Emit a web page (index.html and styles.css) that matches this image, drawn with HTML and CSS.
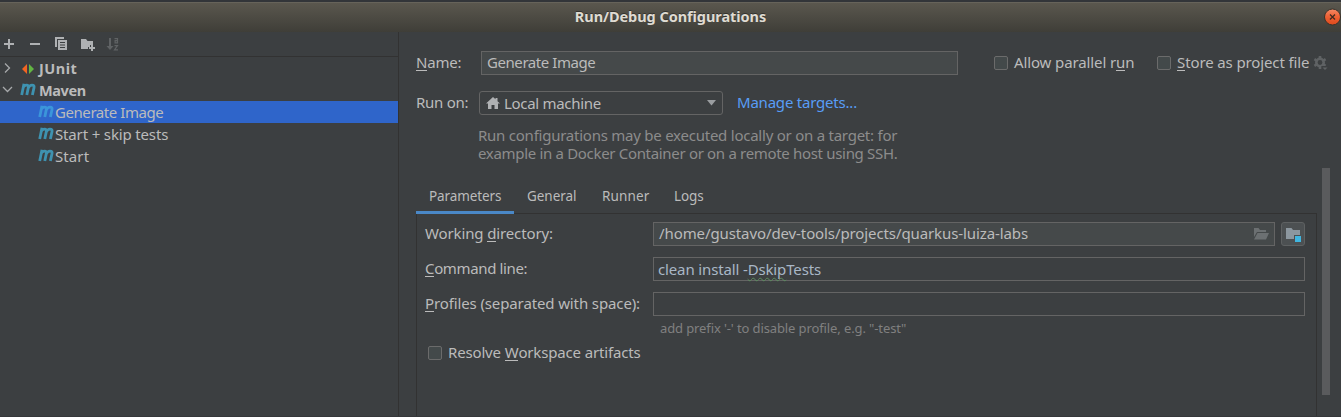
FILE: index.html
```html
<!DOCTYPE html>
<html lang="en"><head><meta charset="utf-8"><title>Run/Debug Configurations</title><link rel="stylesheet" href="styles.css"></head>
<body>
<svg class="defs" width="0" height="0"><defs>
<symbol id="m" viewBox="0 0 16 13"><path fill="none" stroke="currentColor" stroke-width="2.800" d="M4 .8 1.700 12M2.900 5C4 2.700 5 2.200 6.500 2.200 8.400 2.200 8.600 3.200 8.300 4.600L6.800 12M8.300 5C9.400 2.700 10.500 2.200 12 2.200c2 0 2.300 1 2 2.400L12.400 12"/></symbol>
</defs></svg>
<div class="window">
<header class="titlebar">
  <h1 class="title">Run/Debug Configurations</h1>
  <svg class="close" width="17" height="18" viewBox="0 0 17 18"><defs><linearGradient id="cg" x2="0" y2="1"><stop offset="0" stop-color="#f38a66"/><stop offset=".5" stop-color="#ee5f32"/><stop offset="1" stop-color="#dd4a1c"/></linearGradient></defs><circle cx="8.500" cy="9" r="8" fill="url(#cg)" stroke="#34322c"/><path d="m6 6.500 5 5m0-5-5 5" stroke="#3c2a20" stroke-width="1.300"/></svg>
</header>
<div class="main">
  <aside class="sidebar">
    <div class="toolbar">
      <svg width="16" height="16" viewBox="0 0 16 16"><path d="M3 8h10M8 3v10" stroke="#afb1b3" stroke-width="2"/></svg>
      <svg width="16" height="16" viewBox="0 0 16 16"><path d="M3 8h10" stroke="#afb1b3" stroke-width="2"/></svg>
      <svg width="16" height="16" viewBox="0 0 16 16"><path fill="#afb1b3" fill-rule="evenodd" d="M2 1h9v2H4v8H2zM5 4h9v10H5zM7 6v1h5V6zM7 8.500v1h5v-1zM7 11v1h5v-1z"/></svg>
      <svg width="16" height="16" viewBox="0 0 16 16"><path fill="#afb1b3" d="M2 3h5l1.500 2H14v4h-3v2H9v2H2zM12 9h2v2h2v2h-2v2h-2v-2h-2v-2h2z"/></svg>
      <svg width="16" height="16" viewBox="0 0 16 16"><path fill="#5f6264" d="M4 2h2v8h2.500L5 14 1.500 10H4z"/><path fill="none" stroke="#5f6264" stroke-width="1.200" d="M9.500 2.600h3v4.200h-2.400V4.700h2.400M9.500 9.600h3l-3 4.200h3.500"/></svg>
    </div>
    <ul class="tree">
      <li class="row group"><svg class="arrow" width="14" height="14" viewBox="0 0 14 14"><path d="m5 2.500 4.500 4.500L5 11.500" fill="none" stroke="#a7a9ab" stroke-width="1.300"/></svg><svg class="junit" width="12" height="10" viewBox="0 0 12 10"><path fill="#f26522" d="M5 0v10L0 5z"/><path fill="#62b543" d="M7 0v10l5-5z"/></svg><span class="t-junit">JUnit</span></li>
      <li class="row group"><svg class="arrow" width="14" height="14" viewBox="0 0 14 14"><path d="m3 4 4.500 4.500L12 4" fill="none" stroke="#a7a9ab" stroke-width="1.300"/></svg><svg class="maven"><use href="#m"/></svg><span class="t-maven">Maven</span></li>
      <li class="row child selected"><svg class="maven"><use href="#m"/></svg><span class="t-image">Generate Image</span></li>
      <li class="row child"><svg class="maven"><use href="#m"/></svg><span class="t-skip">Start + skip tests</span></li>
      <li class="row child"><svg class="maven"><use href="#m"/></svg><span class="t-start">Start</span></li>
    </ul>
  </aside>
  <main class="content">
    <div class="line name-line">
      <label class="name-label"><u>N</u>ame:</label>
      <div class="field name-field t-image">Generate Image</div>
      <i class="box"></i><span class="option parallel">Allow parallel r<u>u</u>n</span>
      <i class="box"></i><span class="option store"><u>S</u>tore as project file</span>
      <svg class="gear" width="16" height="16" viewBox="0 0 16 16"><circle cx="7" cy="7.500" r="3.700" fill="none" stroke="#5f6264" stroke-width="2.600"/><path d="M7 1v2.500M7 11.500V14M1.400 4.200l2.100 1.300M10.500 9.500l2 1.300M1.400 10.800l2.100-1.300M10.500 5.500l2.100-1.300" stroke="#5f6264" stroke-width="2.600"/><path d="M8 11h7.500v4H11z" fill="#3c3f41"/><path d="M9.500 12.500h5L12 15z" fill="#5f6264"/></svg>
    </div>
    <div class="line run-line">
      <label class="run-label">Run on:</label>
      <div class="combo"><svg width="14" height="12" viewBox="0 0 14 12"><path fill="#afb1b3" d="M7 0 0 6.500h2V12h3.500V8h3v4H12V6.500h2l-2.500-2.300V1h-2v1.300z"/></svg><span class="combo-text">Local machine</span><svg width="9" height="6" viewBox="0 0 9 6"><path fill="#9a9da0" d="M0 0h9L4.500 5.500z"/></svg></div>
      <a class="link">Manage targets...</a>
    </div>
    <p class="hint"><span class="hint-first">Run configurations may be executed locally or on a target: for</span><span class="hint-second">example in a Docker Container or on a remote host using SSH.</span></p>
    <nav class="tabs"><span class="tab active">Parameters</span><span class="tab general">General</span><span class="tab runner">Runner</span><span class="tab logs">Logs</span></nav>
    <section class="panel">
      <div class="form-row"><label class="t-working">Working <u>d</u>irectory:</label><div class="field path"><span>/home/gustavo/dev-tools/projects/quarkus-luiza-labs</span><svg width="16" height="12" viewBox="0 0 16 12"><path fill="#6c7072" d="M1 0h4.500l1.500 2h6v2H4L1 9zM4.500 5H16l-3 6.500H1z"/></svg></div>
        <div class="browse"><svg width="16" height="14" viewBox="0 0 16 14"><path fill="#8c979f" d="M0 0h5.500L7 2h7v5H8v4H0z"/><path fill="#40b6e0" d="M9 8h6v6H9z"/></svg></div></div>
      <div class="form-row"><label class="t-command"><u>C</u>ommand line:</label><div class="field command"><span>clean install -<span class="typo">Dskip</span>Tests</span></div></div>
      <div class="form-row"><label class="t-profiles"><u>P</u>rofiles (separated with space):</label><div class="field profiles"></div></div>
      <p class="note">add prefix '-' to disable profile, e.g. "-test"</p>
      <div class="resolve"><i class="box"></i><span>Resolve <u>W</u>orkspace artifacts</span></div>
    </section>
  </main>
  <div class="scroll"><div class="thumb"></div></div>
</div>
</div>
</body></html>
```
FILE: styles.css
```css
* { box-sizing: border-box; }
body { margin: 0; background: #3c3f41; color: #bbb; font: 15px/18px "Noto Sans", sans-serif; overflow: hidden; }
svg { display: block; flex: none; }
.defs { position: absolute; }
u { text-decoration: none; box-shadow: inset 0 -1px #bbb; display: inline-block; height: 18px; line-height: 18px; vertical-align: top; }
.window { height: 417px; display: flex; flex-direction: column; white-space: nowrap; border-bottom: 1px solid #35373a; }
.titlebar { height: 32px; flex: none; border-top: 2px solid #323539; background: linear-gradient(#66635a 0 1px, #5a574e 1px, #3f3e38); display: grid; grid-template-columns: 1fr auto 1fr; align-items: center; }
.title { grid-column: 2; margin: 0; font-size: 14.5px; font-weight: bold; line-height: 28px; padding-bottom: 2px; color: #dfdbd2; letter-spacing: -.06px; text-shadow: 0 -1px #33322e; }
.close { justify-self: end; }
.main { flex: 1; display: flex; min-height: 0; }
.sidebar { width: 399px; border-right: 1px solid #323232; }
.toolbar { height: 25px; display: flex; gap: 10px; padding: 4px 1px; border-bottom: 1px solid #323232; }
.tree { list-style: none; margin: 0; padding: 0; }
.row { height: 22px; display: flex; align-items: center; line-height: 22px; }
.group { font-weight: bold; font-size: 14.5px; }
.group span { margin-top: -1px; }
.row.child { padding-left: 38px; }
.selected { background: #2f65ca; }
.arrow { margin-top: -1px; }
.junit { margin: 1px 5px 0 8px; }
.maven { width: 16px; height: 13px; margin: -1px 1px 0 0; color: #3e92b0; }
.group .maven { margin: -2px 3px 0 6px; }
.selected .maven { color: #3b96da; }
.t-junit { letter-spacing: .5px; }
.t-maven { letter-spacing: -.4px; }
.t-image { letter-spacing: -.43px; }
.t-skip { letter-spacing: -.15px; }
.t-start { letter-spacing: .1px; }
.content { width: 917px; flex: none; padding: 19px 0 0 17px; display: flex; flex-direction: column; }
.line { display: flex; height: 24px; align-items: center; }
.line label, .option, .link, .form-row label, .resolve span { position: relative; top: -1px; }
.line > * { flex: none; }
.name-label { width: 65px; letter-spacing: -.2px; }
.field { height: 24px; border: 1px solid #646464; padding-left: 5px; line-height: 20px; }
.name-field { width: 477px; background: #45494a; margin-right: 36px; }
.box { width: 14px; height: 14px; flex: none; border: 1px solid #6b6b6b; border-radius: 2px; background: #43494a; }
.option { margin-left: 6px; }
.parallel { width: 143px; letter-spacing: -.12px; }
.store { width: 136px; letter-spacing: -.12px; }
.run-line { margin-top: 16px; }
.run-label { width: 63px; letter-spacing: -.25px; }
.combo { width: 244px; height: 24px; border: 1px solid #646464; border-radius: 3px; display: flex; align-items: center; padding: 0 6px; }
.combo-text { flex: 1; padding: 0 0 1px 4px; letter-spacing: -.3px; }
.link { margin-left: 14px; color: #589df6; letter-spacing: -.21px; }
.hint { margin: 11px 0 0 62px; color: #8c8c8c; display: flex; flex-direction: column; }
.hint-first { letter-spacing: -.24px; }
.hint-second { letter-spacing: -.32px; }
.tabs { height: 35px; margin-top: 17px; width: 901px; flex: none; display: flex; font-size: 13.5px; line-height: 35px; box-shadow: inset 0 -1px #323232; }
.tab { height: 35px; margin-right: 13px; }
.active { width: 98px; padding-left: 13px; border-bottom: 3px solid #4a88c7; letter-spacing: -.1px; }
.general { width: 62px; letter-spacing: -.05px; }
.runner { width: 59px; letter-spacing: .15px; }
.logs { letter-spacing: -.1px; }
.panel { width: 901px; flex: 1; border: solid #323232; border-width: 0 1px; padding: 8px 11px 0 8px; }
.form-row { height: 24px; display: flex; align-items: center; margin-bottom: 11px; }
.form-row label { width: 228px; }
.t-working { letter-spacing: -.13px; }
.t-command { letter-spacing: -.36px; }
.t-profiles { letter-spacing: -.12px; }
.path { width: 622px; background: #45494a; display: flex; align-items: center; justify-content: space-between; padding-right: 5px; letter-spacing: -.1px; }
.path span { margin-top: -2px; }
.browse { width: 24px; height: 24px; margin-left: 6px; border: 1px solid #5e6162; border-radius: 3px; background: #4c5052; padding: 5px 0 0 4px; }
.command, .profiles { width: 652px; }
.command { color: #a9b7c6; padding-left: 4px; padding-top: 1px; letter-spacing: -.14px; }
.typo { text-decoration: underline wavy #5b8a5e 1px; text-underline-offset: 2px; text-decoration-skip-ink: none; }
.note { margin: -8px 0 0 235px; height: 18px; font-size: 13px; line-height: 18px; letter-spacing: -.11px; color: #808080; }
.resolve { display: flex; align-items: center; gap: 6px; margin: 7px 0 0 3px; letter-spacing: -.16px; }
.scroll { padding: 136px 0 0 6px; }
.thumb { width: 8px; height: 227px; background: #5a5b5d; }
```
